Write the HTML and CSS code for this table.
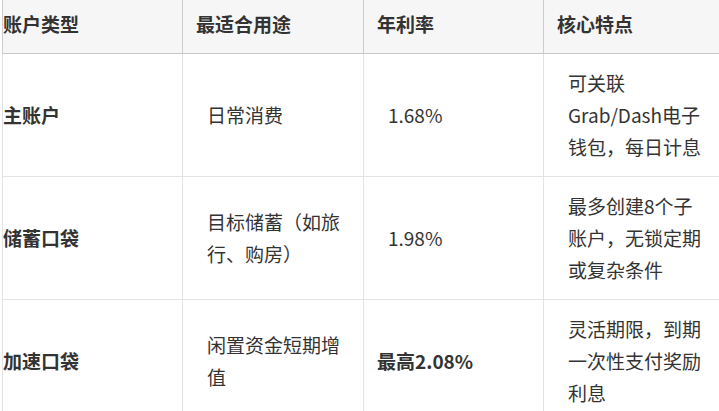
FILE: index.html
```html
<!DOCTYPE html>
<html lang="zh-CN">
<head>
<meta charset="utf-8">
<title>账户类型对比</title>
<link rel="stylesheet" href="styles.css">
</head>
<body>
<table class="cmp">
  <thead>
    <tr>
      <th class="c1">账户类型</th>
      <th class="c2">最适合用途</th>
      <th class="c3">年利率</th>
      <th class="c4">核心特点</th>
    </tr>
  </thead>
  <tbody>
    <tr>
      <td class="name">主账户</td>
      <td class="plain">日常消费</td>
      <td class="plain">1.68%</td>
      <td class="plain">可关联Grab/Dash电子钱包，每日计息</td>
    </tr>
    <tr>
      <td class="name">储蓄口袋</td>
      <td class="plain">目标储蓄（如旅行、购房）</td>
      <td class="plain">1.98%</td>
      <td class="plain">最多创建8个子账户，无锁定期或复杂条件</td>
    </tr>
    <tr>
      <td class="name">加速口袋</td>
      <td class="plain">闲置资金短期增值</td>
      <td class="strong">最高2.08%</td>
      <td class="plain">灵活期限，到期一次性支付奖励利息</td>
    </tr>
  </tbody>
</table>
</body>
</html>
```

FILE: styles.css
```css
html, body {
  margin: 0;
  padding: 0;
  background: #ffffff;
}

body {
  padding-left: 2px;
  font-family: "Noto Sans CJK SC", "Noto Sans", sans-serif;
  font-size: 19px;
  line-height: 32px;
  color: #333333;
}

.cmp {
  border-collapse: separate;
  border-spacing: 0;
  table-layout: fixed;
  width: 721px;
}

.cmp th,
.cmp td {
  box-sizing: border-box;
  text-align: left;
  vertical-align: middle;
  padding: 13px 13px 13px 13px;
  border-left: 1px solid #e3e3e3;
  border-bottom: 1px solid #e3e3e3;
}

.cmp th {
  background: #f6f6f6;
  font-weight: 700;
  padding-top: 8px;
  border-left-color: #cccccc;
  border-bottom-color: #c8c8c8;
}

.cmp .c1 { width: 180px; }
.cmp .c2 { width: 181px; }
.cmp .c3 { width: 180px; }
.cmp .c4 { width: 180px; }

.cmp th.c1,
.cmp td.name {
  padding-left: 0;
}

.cmp td.name,
.cmp td.strong {
  font-weight: 700;
}

.cmp td.plain {
  padding-left: 24px;
}
```
